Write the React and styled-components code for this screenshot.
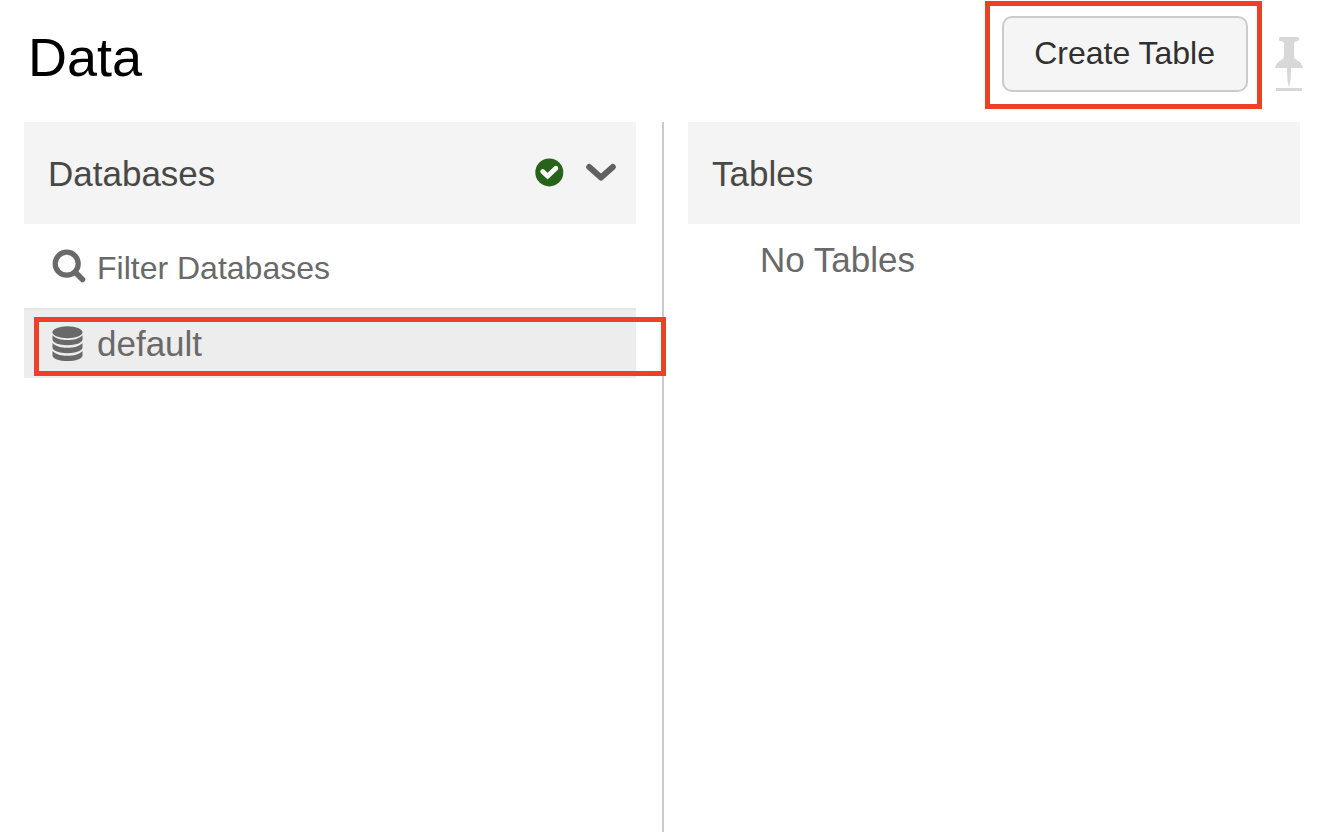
import React from "react";
import styled, { createGlobalStyle } from "styled-components";

const GlobalStyle = createGlobalStyle`
  *, *::before, *::after { box-sizing: border-box; }
  body {
    margin: 0;
    background: #fff;
    font-family: "Liberation Sans", Arial, Helvetica, sans-serif;
  }
  button, input { font-family: inherit; }
  ul { list-style: none; margin: 0; padding: 0; }
`;

const Page = styled.main`
  display: flex;
  flex-direction: column;
  min-height: 100vh;
`;

const Header = styled.header`
  display: flex;
  align-items: center;
  padding: 1px 21px 13px 28px;
`;

const Title = styled.h1`
  margin: 0 auto 0 0;
  padding-top: 4px;
  font-size: 54px;
  line-height: 64px;
  font-weight: 400;
  color: #000;
`;

const Callout = styled.div`
  padding: 10px 9px 12px 12px;
  border: 5px solid #ee4027;
`;

const CreateButton = styled.button`
  display: block;
  height: 76px;
  padding: 0 31px 2px 30px;
  border: 2px solid #cbcbcb;
  border-radius: 10px;
  background: #f5f5f5;
  color: #303030;
  font-size: 32px;
  line-height: 40px;
  cursor: pointer;
`;

const IconButton = styled.button`
  display: flex;
  padding: 0;
  border: 0;
  background: transparent;
  cursor: pointer;
`;

const PinSlot = styled.div`
  padding: 18px 0 0 13px;
`;

const Columns = styled.div`
  flex: 1;
  display: flex;
`;

const Panel = styled.section`
  flex: 1 1 0;
  min-width: 0;
  padding-left: 24px;
  padding-right: ${({ $end }) => $end}px;
  border-left: ${({ $divided }) => ($divided ? "2px solid #cbcbcb" : "0")};
`;

const PanelHeader = styled.div`
  display: flex;
  align-items: center;
  height: 102px;
  padding: 0 20px 0 24px;
  background: #f4f4f4;
`;

const PanelTitle = styled.h2`
  margin: 0 auto 0 0;
  padding-top: 2px;
  font-size: 35px;
  line-height: 40px;
  font-weight: 400;
  color: #484846;
`;

const HeaderIcons = styled.div`
  display: flex;
  align-items: center;
  gap: 22px;
`;

const FilterLabel = styled.label`
  display: flex;
  align-items: center;
  gap: 11px;
  height: 84px;
  padding: 0 28px;
  color: #696969;
`;

const FilterInput = styled.input`
  flex: 1;
  min-width: 0;
  height: 44px;
  padding: 4px 0 0;
  border: 0;
  outline: 0;
  background: transparent;
  color: #696969;
  font-size: 32px;
  &::placeholder { color: #696969; opacity: 1; }
`;

const DatabaseItem = styled.li`
  position: relative;
`;

const DatabaseButton = styled.button`
  display: flex;
  align-items: center;
  gap: 14px;
  width: 100%;
  height: 70px;
  padding: 0 28px;
  border: 0;
  border-top: 2px solid #e5e5e5;
  background: #ededed;
  color: #696969;
  font-size: 35px;
  line-height: 40px;
  text-align: left;
  cursor: pointer;
`;

const RowCallout = styled.div`
  position: absolute;
  inset: 9px -30px 2px 10px;
  border: 5px solid #ee4027;
  pointer-events: none;
`;

const EmptyText = styled.p`
  margin: 0;
  padding: 16px 72px;
  font-size: 35px;
  line-height: 40px;
  color: #696969;
`;

const PinIcon = () => (
  <svg width="28" height="56" viewBox="0 0 28 56" fill="#d8d8d8" aria-hidden="true">
    <path d="M6 1h16q2.300 0 2.300 2.100T22 5.300q-3 .2-3 2.200v12.500c0 2 1 3 3 4.200 3.500 2 5.500 4 5.800 7.800H.2c.3-3.800 2.300-5.800 5.800-7.800 2-1.200 3-2.200 3-4.200V7.500q0-2-3-2.200-2.300-.1-2.300-2.200T6 1Z" />
    <path d="M12 32h4l-.3 11-1.200 7h-1l-1.200-7Z" />
    <path d="M1 52h26v3H1Z" />
  </svg>
);

const CheckCircleIcon = () => (
  <svg width="29" height="30" viewBox="0 0 29 30" role="img" aria-label="Running">
    <circle cx="14.300" cy="14.400" r="14" fill="#27641a" />
    <path d="M7.700 13.500l4.900 4.700 8.300-8" fill="none" stroke="#fff" strokeWidth="4.800" strokeLinecap="round" />
  </svg>
);

const ChevronIcon = () => (
  <svg width="30" height="28" viewBox="0 0 30 28" aria-hidden="true">
    <path d="M3.200 8l11.800 10.500 11.800-10.500" fill="none" stroke="#606060" strokeWidth="6" strokeLinecap="round" strokeLinejoin="round" />
  </svg>
);

const SearchIcon = () => (
  <svg width="34" height="34" viewBox="0 0 34 34" fill="none" stroke="currentColor" aria-hidden="true">
    <circle cx="14.700" cy="14.700" r="11.500" strokeWidth="5.200" />
    <path d="M23.500 23.500l7 7" strokeWidth="5.600" strokeLinecap="round" />
  </svg>
);

const DISC_EDGE = "M.5 9.200C4 12.800 9 13.900 15.500 13.900S27 12.800 30.500 9.200V13.600C30.500 17 23.500 19.300 15.500 19.300S.5 17 .5 13.600Z";

const DatabaseIcon = () => (
  <svg width="31" height="36" viewBox="0 0 31 36" fill="currentColor" aria-hidden="true">
    <ellipse cx="15.500" cy="6.200" rx="15" ry="6" />
    <path d={DISC_EDGE} />
    <path d={DISC_EDGE} transform="translate(0 7.900)" />
    <path d={DISC_EDGE} transform="translate(0 15.800)" />
  </svg>
);

export default function App() {
  return (
    <>
      <GlobalStyle />
      <Page>
        <Header>
          <Title>Data</Title>
          <Callout>
            <CreateButton type="button">Create Table</CreateButton>
          </Callout>
          <PinSlot>
            <IconButton type="button" aria-label="Pin panel">
              <PinIcon />
            </IconButton>
          </PinSlot>
        </Header>
        <Columns>
          <Panel $end={26}>
            <PanelHeader>
              <PanelTitle>Databases</PanelTitle>
              <HeaderIcons>
                <CheckCircleIcon />
                <IconButton type="button" aria-label="Choose cluster">
                  <ChevronIcon />
                </IconButton>
              </HeaderIcons>
            </PanelHeader>
            <FilterLabel>
              <SearchIcon />
              <FilterInput type="text" placeholder="Filter Databases" aria-label="Filter Databases" />
            </FilterLabel>
            <ul>
              <DatabaseItem>
                <DatabaseButton type="button">
                  <DatabaseIcon />
                  default
                </DatabaseButton>
                <RowCallout />
              </DatabaseItem>
            </ul>
          </Panel>
          <Panel $end={24} $divided>
            <PanelHeader>
              <PanelTitle>Tables</PanelTitle>
            </PanelHeader>
            <EmptyText>No Tables</EmptyText>
          </Panel>
        </Columns>
      </Page>
    </>
  );
}
